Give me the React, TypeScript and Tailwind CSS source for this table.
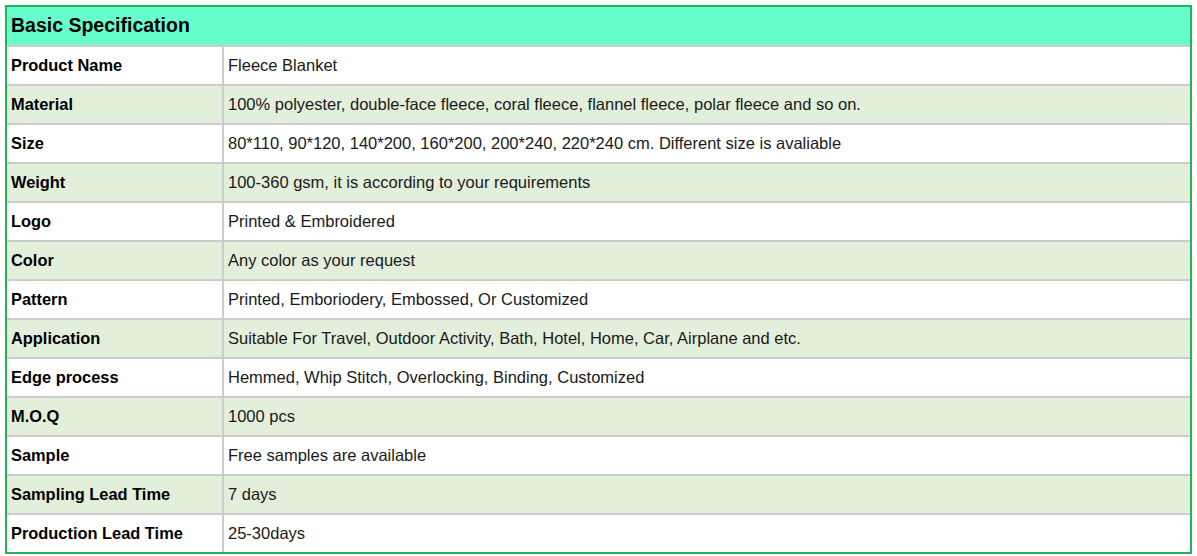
const rows: [string, string][] = [
  ["Product Name", "Fleece Blanket"],
  ["Material", "100% polyester, double-face fleece, coral fleece, flannel fleece, polar fleece and so on."],
  ["Size", "80*110, 90*120, 140*200, 160*200, 200*240, 220*240 cm. Different size is avaliable"],
  ["Weight", "100-360 gsm, it is according to your requirements"],
  ["Logo", "Printed & Embroidered"],
  ["Color", "Any color as your request"],
  ["Pattern", "Printed, Emboriodery, Embossed, Or Customized"],
  ["Application", "Suitable For Travel, Outdoor Activity, Bath, Hotel, Home, Car, Airplane and etc."],
  ["Edge process", "Hemmed, Whip Stitch, Overlocking, Binding, Customized"],
  ["M.O.Q", "1000 pcs"],
  ["Sample", "Free samples are available"],
  ["Sampling Lead Time", "7 days"],
  ["Production Lead Time", "25-30days"],
];

export default function App() {
  return (
    <div className="min-h-[556px] bg-white pl-[5px] pt-[5px] font-['Liberation_Sans',Arial,sans-serif] text-black">
      <div className="w-[1187px] border-2 border-[#22b35b]">
        {/* header */}
        <div className="flex h-[40px] items-center border-b-2 border-[#cccccc] bg-[#66ffcc] pl-1 text-[19.5px] font-bold">
          Basic Specification
        </div>

        {rows.map(([label, value], i) => (
          <div
            key={label}
            className={
              "grid grid-cols-[217px_1fr] " +
              (i % 2 === 1 ? "bg-[#e2efda] " : "bg-white ") +
              (i < rows.length - 1 ? "h-[39px] border-b-2 border-[#cccccc]" : "h-[37px]")
            }
          >
            <div className="flex items-center border-r-2 border-[#cccccc] pl-1 text-[16.4px] font-bold">
              {label}
            </div>
            <div className="flex items-center pl-1 text-[16.5px] text-[#1a1a1a]">{value}</div>
          </div>
        ))}
      </div>
    </div>
  );
}
